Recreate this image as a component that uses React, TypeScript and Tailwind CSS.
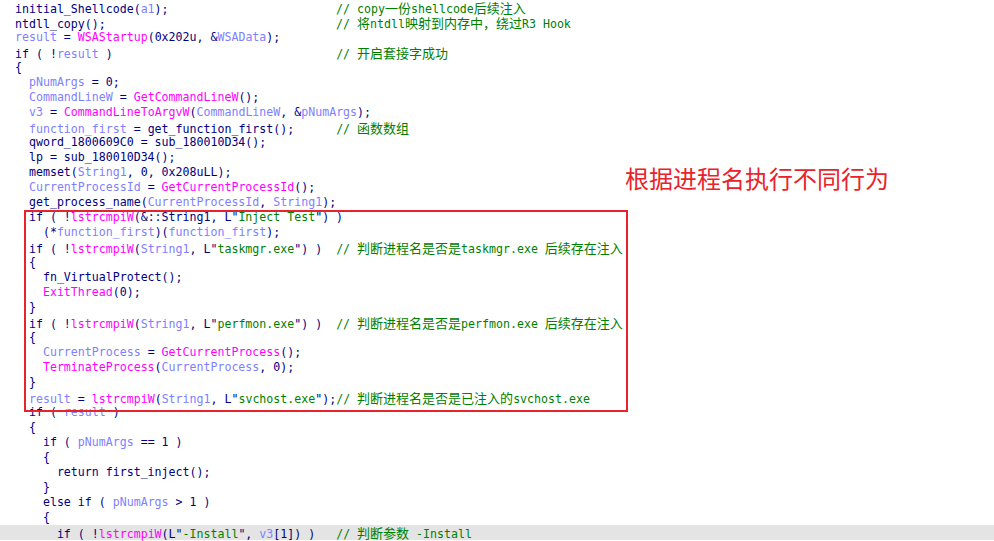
type Tok = [string, string]

const N = 'text-[#000080]'
const V = 'text-[#8080ff]'
const M = 'text-[#ff00ff]'
const S = 'text-[#008000]'

const COMMENT_COL = 46

type Line = { toks: Tok[]; comment?: string }

const lines: Line[] = [
  { toks: [[N, 'initial_Shellcode('], [V, 'a1'], [N, ');']], comment: '// copy一份shellcode后续注入' },
  { toks: [[N, 'ntdll_copy();']], comment: '// 将ntdll映射到内存中，绕过R3 Hook' },
  { toks: [[V, 'result'], [N, ' = '], [M, 'WSAStartup'], [N, '(0x202u, &'], [V, 'WSAData'], [N, ');']] },
  { toks: [[N, 'if ( !'], [V, 'result'], [N, ' )']], comment: '// 开启套接字成功' },
  { toks: [[N, '{']] },
  { toks: [[N, '  '], [V, 'pNumArgs'], [N, ' = 0;']] },
  { toks: [[N, '  '], [V, 'CommandLineW'], [N, ' = '], [M, 'GetCommandLineW'], [N, '();']] },
  { toks: [[N, '  '], [V, 'v3'], [N, ' = '], [M, 'CommandLineToArgvW'], [N, '('], [V, 'CommandLineW'], [N, ', &'], [V, 'pNumArgs'], [N, ');']] },
  { toks: [[N, '  '], [V, 'function_first'], [N, ' = get_function_first();']], comment: '// 函数数组' },
  { toks: [[N, '  qword_1800609C0 = sub_180010D34();']] },
  { toks: [[N, '  lp = sub_180010D34();']] },
  { toks: [[N, '  memset('], [V, 'String1'], [N, ', 0, 0x208uLL);']] },
  { toks: [[N, '  '], [V, 'CurrentProcessId'], [N, ' = '], [M, 'GetCurrentProcessId'], [N, '();']] },
  { toks: [[N, '  get_process_name('], [V, 'CurrentProcessId'], [N, ', '], [V, 'String1'], [N, ');']] },
  { toks: [[N, '  if ( !'], [M, 'lstrcmpiW'], [N, '(&::String1, L"'], [S, 'Inject Test'], [N, '") )']] },
  { toks: [[N, '    (*'], [V, 'function_first'], [N, ')('], [V, 'function_first'], [N, ');']] },
  { toks: [[N, '  if ( !'], [M, 'lstrcmpiW'], [N, '('], [V, 'String1'], [N, ', L"'], [S, 'taskmgr.exe'], [N, '") )']], comment: '// 判断进程名是否是taskmgr.exe 后续存在注入' },
  { toks: [[N, '  {']] },
  { toks: [[N, '    fn_VirtualProtect();']] },
  { toks: [[N, '    '], [M, 'ExitThread'], [N, '(0);']] },
  { toks: [[N, '  }']] },
  { toks: [[N, '  if ( !'], [M, 'lstrcmpiW'], [N, '('], [V, 'String1'], [N, ', L"'], [S, 'perfmon.exe'], [N, '") )']], comment: '// 判断进程名是否是perfmon.exe 后续存在注入' },
  { toks: [[N, '  {']] },
  { toks: [[N, '    '], [V, 'CurrentProcess'], [N, ' = '], [M, 'GetCurrentProcess'], [N, '();']] },
  { toks: [[N, '    '], [M, 'TerminateProcess'], [N, '('], [V, 'CurrentProcess'], [N, ', 0);']] },
  { toks: [[N, '  }']] },
  { toks: [[N, '  '], [V, 'result'], [N, ' = '], [M, 'lstrcmpiW'], [N, '('], [V, 'String1'], [N, ', L"'], [S, 'svchost.exe'], [N, '");']], comment: '// 判断进程名是否是已注入的svchost.exe' },
  { toks: [[N, '  if ( '], [V, 'result'], [N, ' )']] },
  { toks: [[N, '  {']] },
  { toks: [[N, '    if ( '], [V, 'pNumArgs'], [N, ' == 1 )']] },
  { toks: [[N, '    {']] },
  { toks: [[N, '      return first_inject();']] },
  { toks: [[N, '    }']] },
  { toks: [[N, '    else if ( '], [V, 'pNumArgs'], [N, ' > 1 )']] },
  { toks: [[N, '    {']] },
  { toks: [[N, '      if ( !'], [M, 'lstrcmpiW'], [N, '(L"'], [S, '-Install'], [N, '", '], [V, 'v3'], [N, '[1]) )']], comment: '// 判断参数 -Install' },
]

// CJK runs get their own font and a full-width advance, like IDA's fallback font
function Comment({ text }: { text: string }) {
  const parts = text.split(/([\u3000-\u303f\u4e00-\u9fff\uff00-\uffef]+)/)
  return (
    <span className="text-[#008000]">
      {parts.map((p, i) =>
        i % 2 === 1 ? (
          <span key={i} className="font-['Noto_Sans_CJK_SC',sans-serif] text-[13px]">
            {p}
          </span>
        ) : (
          <span key={i}>{p}</span>
        ),
      )}
    </span>
  )
}

function CodeLine({ line, active }: { line: Line; active: boolean }) {
  const len = line.toks.reduce((n, t) => n + t[1].length, 0)
  const pad = line.comment ? ' '.repeat(Math.max(0, COMMENT_COL - len)) : ''
  return (
    <div className={`h-[15px] pl-[15px] whitespace-pre ${active ? 'bg-[#e4e4e4]' : ''}`}>
      {line.toks.map((t, i) => (
        <span key={i} className={t[0]}>
          {t[1]}
        </span>
      ))}
      {pad}
      {line.comment && <Comment text={line.comment} />}
    </div>
  )
}

export default function App() {
  return (
    <div className="relative w-[994px] h-[541px] overflow-hidden bg-white">
      <div className="font-['DejaVu_Sans_Mono',monospace] text-[11.6px] leading-[15px]">
        {lines.map((l, i) => (
          <CodeLine key={i} line={l} active={i === lines.length - 1} />
        ))}
      </div>

      {/* annotation overlay */}
      <div className="absolute left-[24px] top-[210px] w-[604px] h-[202px] border-2 border-[#e8232b]" />
      <div className="absolute left-[625px] top-[166px] font-['Noto_Sans_CJK_SC',sans-serif] text-[24px] leading-[24px] text-[#e8232b] whitespace-nowrap">
        根据进程名执行不同行为
      </div>
    </div>
  )
}
